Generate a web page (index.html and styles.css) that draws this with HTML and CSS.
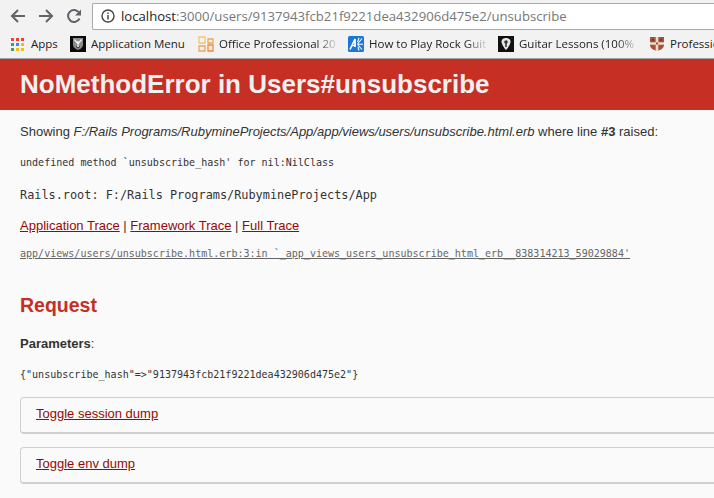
FILE: index.html
```html
<!DOCTYPE html>
<html lang="en">
<head>
<meta charset="utf-8">
<title>NoMethodError</title>
<link rel="stylesheet" href="styles.css">
</head>
<body>
<div class="browser">
  <div class="toolbar">
    <svg class="nav" width="18" height="18" viewBox="0 0 18 18"><path d="M16 9H3.500M9 3 3 9l6 6" fill="none" stroke="#5f6368" stroke-width="2"/></svg>
    <svg class="nav" width="18" height="18" viewBox="0 0 18 18"><path d="M2 9h12.500M9 3l6 6-6 6" fill="none" stroke="#5f6368" stroke-width="2"/></svg>
    <svg class="nav" width="18" height="18" viewBox="0 0 18 18"><path d="M14.500 11.500A6 6 0 1 1 14 5.500" fill="none" stroke="#5f6368" stroke-width="2"/><path d="M16 2.500V8.500h-6z" fill="#5f6368"/></svg>
    <div class="omnibox">
      <svg class="info" width="14" height="14" viewBox="0 0 14 14"><circle cx="7" cy="7" r="6" fill="none" stroke="#444" stroke-width="1.400"/><path d="M7 6v4.400M7 3.400v1.500" stroke="#444" stroke-width="1.500"/></svg>
      <span class="host">localhost</span><span class="path">:3000/users/9137943fcb21f9221dea432906d475e2/unsubscribe</span>
    </div>
  </div>
  <div class="bookmarks">
    <div class="bm bm-apps">
      <svg width="13" height="13" viewBox="0 0 13 13">
        <rect x="0" y="0" width="3" height="3" fill="#ea4335"/><rect x="5" y="0" width="3" height="3" fill="#ea4335"/><rect x="10" y="0" width="3" height="3" fill="#ea4335"/>
        <rect x="0" y="5" width="3" height="3" fill="#34a853"/><rect x="5" y="5" width="3" height="3" fill="#2f8ff0"/><rect x="10" y="5" width="3" height="3" fill="#fbbc05"/>
        <rect x="0" y="10" width="3" height="3" fill="#34a853"/><rect x="5" y="10" width="3" height="3" fill="#fbbc05"/><rect x="10" y="10" width="3" height="3" fill="#fbbc05"/></svg>
      <span>Apps</span>
    </div>
    <div class="bm bm-menu">
      <svg width="16" height="16" viewBox="0 0 16 16"><rect width="16" height="16" fill="#0a0a0a"/><path d="M3 2h10v6.500c0 3-2.500 4.500-5 5.500-2.500-1-5-2.500-5-5.500z" fill="#8c8c8c"/><path d="M4.500 3.500 8 8l3.500-4.500M8 5v7" stroke="#eee" stroke-width="1.300" fill="none"/><path d="M6 10.500 8 12l2-1.500" stroke="#333" stroke-width="1" fill="none"/></svg>
      <span>Application Menu</span>
    </div>
    <div class="bm bm-office">
      <svg width="16" height="16" viewBox="0 0 16 16"><g fill="none" stroke-width="1.300"><path d="M1 1h6v6H1z" stroke="#f5c56b"/><path d="M10 3h5v4h-5z" stroke="#f2a65a"/><path d="M1 10h6v5H1z" stroke="#f2a65a"/><path d="M10 9h5v6h-5z" stroke="#ee8a3c"/></g></svg>
      <span class="fade">Office Professional 20</span>
    </div>
    <div class="bm bm-rock">
      <svg width="16" height="16" viewBox="0 0 16 16"><rect width="16" height="16" rx="1.500" fill="#1b78d8"/><path d="M2 13.500 7 3v8" stroke="#fff" stroke-width="1.700" fill="none"/><path d="M4 9.500h3" stroke="#fff" stroke-width="1.200"/><path d="M9.500 8 14 2.500M9.500 8.300H15M9.500 8.500l4.500 5M9.500 6 11 2M10 11l1 3.500" stroke="#fff" stroke-width="1.100" fill="none"/></svg>
      <span class="fade">How to Play Rock Guit</span>
    </div>
    <div class="bm bm-guitar">
      <svg width="16" height="16" viewBox="0 0 16 16"><rect width="16" height="16" fill="#111"/><path d="M3.500 5.500C3.500 3 6 2 8 2s4.500 1 4.500 3.500S10 12 8 14C6 12 3.500 8 3.500 5.500z" fill="#e6e6e6"/><circle cx="8" cy="6" r="1.800" fill="#333"/><path d="M8 7v4" stroke="#333" stroke-width="1.500"/></svg>
      <span class="fade">Guitar Lessons (100%</span>
    </div>
    <div class="bm bm-prof">
      <svg width="16" height="16" viewBox="0 0 16 16"><path d="M1 1h14v8c0 3-3 5-7 6-4-1-7-3-7-6z" fill="#a5523a"/><path d="M8 1v14M1 7.500h14" stroke="#eadccb" stroke-width="2.600"/><path d="M3 3h2v2H3zM11 3h2v2h-2z" fill="#6f3a28"/><rect x="7" y="6.500" width="2" height="2" fill="#b5432f"/></svg>
      <span>Professional</span>
    </div>
  </div>
</div>
<header class="error-header">
  <h1>NoMethodError in Users#unsubscribe</h1>
</header>
<main class="content">
  <p class="showing">Showing <i>F:/Rails Programs/RubymineProjects/App/app/views/users/unsubscribe.html.erb</i> where line <b>#3</b> raised:</p>
  <pre class="msg">undefined method `unsubscribe_hash' for nil:NilClass</pre>
  <pre class="root">Rails.root: F:/Rails Programs/RubymineProjects/App</pre>
  <p class="traces"><a href="#">Application Trace</a> | <a href="#">Framework Trace</a> | <a href="#">Full Trace</a></p>
  <pre class="trace-line"><a href="#">app/views/users/unsubscribe.html.erb:3:in `_app_views_users_unsubscribe_html_erb__838314213_59029884'</a></pre>
  <h2>Request</h2>
  <p class="params"><b>Parameters</b>:</p>
  <pre class="param-dump">{"unsubscribe_hash"=&gt;"9137943fcb21f9221dea432906d475e2"}</pre>
  <div class="dump"><a href="#">Toggle session dump</a></div>
  <div class="dump"><a href="#">Toggle env dump</a></div>
</main>
</body>
</html>
```
FILE: styles.css
```css
* { box-sizing: border-box; }
html, body { margin: 0; padding: 0; }
body {
  width: 714px;
  height: 498px;
  overflow: hidden;
  background: #fafafa;
  color: #333;
  font-family: "Liberation Sans", Arial, sans-serif;
  font-size: 13px;
  line-height: 18px;
}
.browser {
  height: 59px;
  background: #f2f2f2;
  font-family: "Open Sans", "Noto Sans", sans-serif;
  font-size: 11.5px;
  color: #222;
  border-bottom: 1px solid #a5a5a5;
}
.toolbar {
  height: 30px;
  display: flex;
  align-items: center;
  padding: 2px 0 0 9px;
  gap: 10px;
}
.nav { flex: none; }
.omnibox {
  flex: none;
  width: 640px;
  height: 27px;
  margin-left: -1px;
  background: #fff;
  border: 1px solid #a9a9a9;
  border-right: none;
  border-radius: 2px 0 0 2px;
  display: flex;
  align-items: center;
  padding-left: 8px;
  font-size: 13.15px;
  white-space: nowrap;
}
.info { margin-right: 6px; flex: none; }
.host { color: #222; }
.path { color: #777; }
.bookmarks {
  height: 28px;
  display: flex;
  align-items: center;
  white-space: nowrap;
  overflow: hidden;
}
.bm {
  flex: none;
  display: flex;
  align-items: center;
  gap: 5px;
  overflow: hidden;
}
.bm svg { flex: none; }
.bm-apps { width: 59px; margin-left: 11px; gap: 7px; }
.bm-menu { width: 128px; }
.bm-office { width: 150px; }
.bm-rock { width: 150px; }
.bm-guitar { width: 151px; }
.bm-prof { width: 70px; }
.fade {
  flex: 1;
  overflow: hidden;
  padding-right: 12px;
  -webkit-mask-image: linear-gradient(to right, #000 75%, transparent 93%);
  mask-image: linear-gradient(to right, #000 75%, transparent 93%);
}
.error-header {
  height: 51px;
  background: #c52f24;
  padding: 13px 20px 0;
}
h1 {
  margin: 0;
  color: #f0f0f0;
  font-size: 26px;
  line-height: 25px;
  font-weight: bold;
}
.content { padding: 0 0 0 20px; }
p { margin: 0; }
pre {
  margin: 0;
  font-family: "DejaVu Sans Mono", monospace;
  white-space: pre;
}
a { color: #980905; }
.showing { margin-top: 13px; }
.msg { margin-top: 13px; font-size: 10.04px; }
.root { margin-top: 14px; font-size: 11.86px; }
.traces { margin-top: 13px; }
.trace-line { margin-top: 10px; font-size: 10.04px; }
.trace-line a { color: #666; }
h2 {
  margin: 30px 0 0;
  color: #c52f24;
  font-size: 19.5px;
  line-height: 25px;
}
.params { margin-top: 17px; }
.param-dump { margin-top: 13px; font-size: 10.04px; }
.dump {
  height: 37px;
  margin: 13px -40px 0 0;
  padding: 7px 15px;
  background: #fafafa;
  border: 1px solid #d0d0d0;
  border-bottom-width: 2px;
  border-radius: 4px;
}
.dump + .dump { margin-top: 13px; }
```
